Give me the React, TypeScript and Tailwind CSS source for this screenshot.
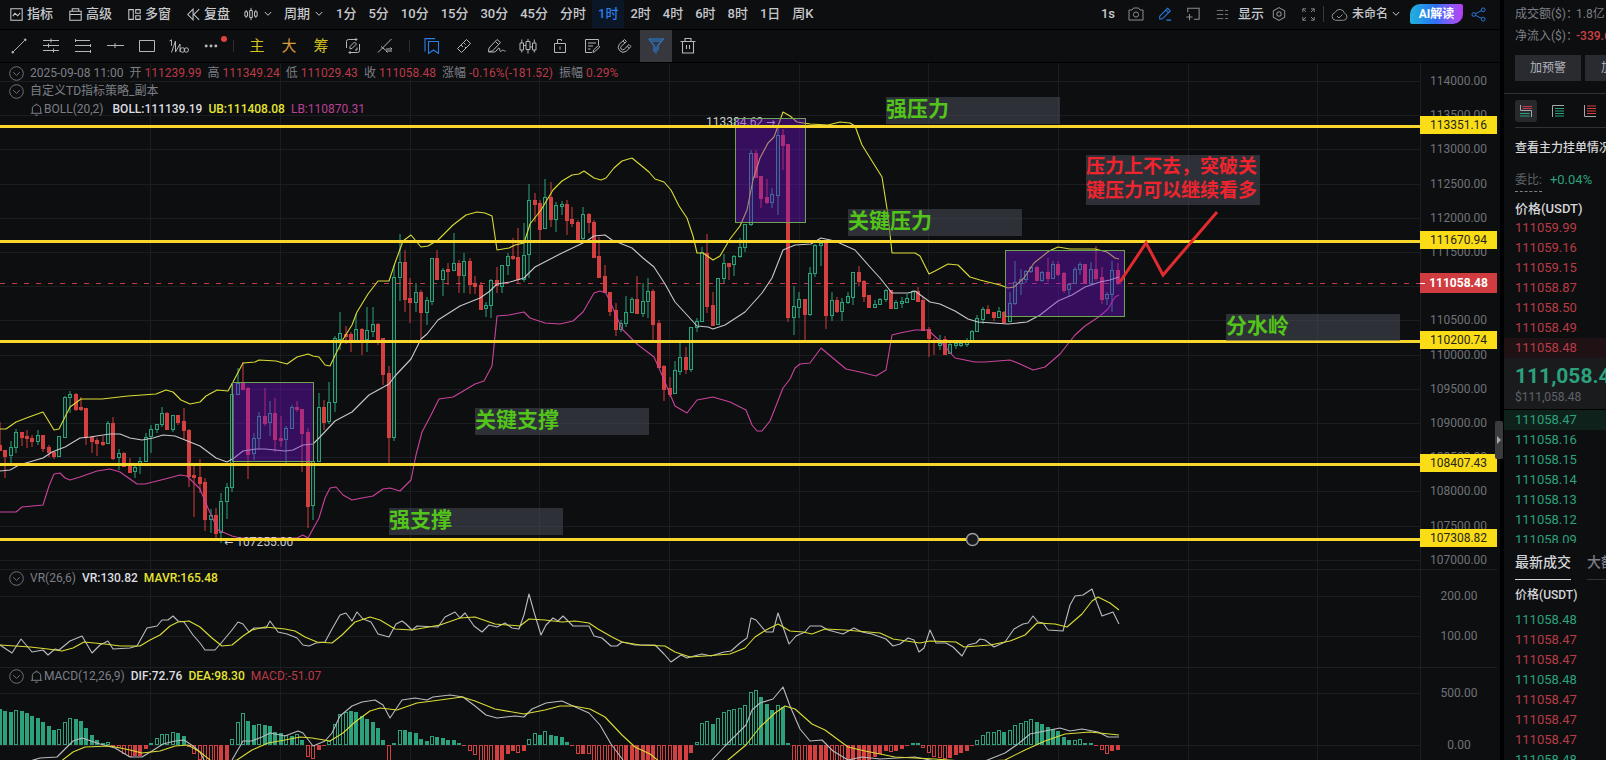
import type { ReactNode } from "react";

/* ---------- chart data (canvas coordinates) ---------- */

const STEP = 5.4;

// One token per candle: direction, wick top, body top, body bottom, wick bottom.
const CANDLES = `
R422,445,450,450 R450,450,456,478 G441,447,455,463 G429,432,447,453 R432,432,437,446 R430,436,438,448
R435,438,441,447 G430,435,441,445 R435,435,448,452 R445,447,452,457 R451,452,456,459 G436,436,456,456
G396,397,437,437 G391,394,397,413 R393,394,409,411 R397,407,409,411 R408,408,437,445 R436,437,441,453
R438,440,443,456 R436,442,444,446 G421,423,443,443 R417,423,458,460 G449,453,457,470 R452,453,466,467
R458,466,472,472 G463,467,471,478 G457,461,465,474 G433,437,461,461 G425,429,436,453 G424,424,429,433
G407,413,424,427 R412,413,429,429 G415,415,429,432 R415,415,422,425 R408,421,430,440 R429,430,476,487
R465,475,477,517 R459,477,483,493 R478,482,519,531 G509,515,519,533 R508,515,533,538 G493,501,532,543
G483,487,501,519 G383,394,487,492 G368,383,394,395 R362,383,389,390 R387,388,454,479 G433,438,453,460
G412,416,438,449 R388,416,423,426 G401,413,422,436 R398,413,439,452 R416,438,440,447 G426,428,439,465
G405,407,428,429 R401,407,409,412 R409,409,433,472 R428,432,506,528 G461,461,505,520 G393,407,461,462
R400,407,422,430 G382,402,421,424 G336,338,402,412 G312,333,339,350 R326,334,336,344 R332,334,341,352
G314,329,341,341 R328,329,340,355 G307,330,339,352 G307,324,331,337 R323,324,339,345 R338,338,374,385
R366,373,437,463 G265,277,437,441 G234,262,277,301 R250,262,299,312 R278,298,302,323 G283,292,302,312
R290,292,312,338 G297,300,312,325 G258,258,301,305 R250,258,279,279 G268,270,279,296 R263,269,271,285
G233,263,270,271 R260,263,275,293 G253,261,275,293 R258,261,284,294 R276,283,286,294 R282,285,309,309
G302,305,308,317 G279,280,305,318 R267,280,285,293 G265,265,286,293 G253,256,265,275 R238,256,258,260
R228,257,279,283 G223,255,279,282 G184,200,254,278 R193,200,204,222 R200,203,229,240 G179,197,228,229
R182,197,219,227 G202,205,219,232 G201,204,206,215 R200,204,220,235 R207,219,223,227 R220,222,239,243
G207,214,238,243 R213,214,222,233 R220,222,257,258 R237,256,277,277 R265,276,292,293 R292,292,311,316
R303,310,329,336 G320,323,329,332 G296,312,323,327 G297,299,312,312 R276,299,313,313 G283,301,313,317
G278,291,301,318 R289,291,324,340 R320,323,367,368 R365,366,389,401 R377,388,394,397 G361,370,393,393
G342,357,371,375 R347,357,369,374 G327,327,369,372 G318,321,327,332 G247,252,321,322 R234,253,306,313
R292,305,325,325 G278,278,324,325 G254,263,278,283 R263,263,266,280 G255,256,264,276 G238,247,256,258
G224,224,247,252 G150,153,224,226 R150,153,177,177 R176,176,198,208 R179,197,202,204 G188,194,202,208
G125,135,195,215 R129,135,145,170 R144,144,317,322 G286,306,317,335 G292,299,307,318 R299,299,314,340
G267,273,314,316 G244,245,273,277 G242,243,245,266 R242,243,315,329 G292,300,315,321 R297,300,311,313
G298,302,311,321 G292,296,302,304 G272,272,297,305 R266,272,281,286 R280,281,296,302 R295,295,307,308
G300,304,307,307 G298,299,304,305 G289,290,299,302 R290,290,308,308 G300,302,308,309 G297,301,303,308
G294,298,302,303 G290,291,299,300 R287,291,301,302 R297,300,330,330 R327,329,338,357 R338,340,342,355
G335,343,345,350 R336,339,354,355 G343,344,353,353 G342,343,345,349 G340,343,345,347 G338,342,344,347
G330,331,340,341 G315,318,331,332 G307,309,319,324 R305,309,313,314 R312,312,317,321 G307,311,317,318
R311,312,322,322 G292,303,321,322 G261,282,303,305 G269,279,283,295 G270,271,279,283 G266,267,271,273
R266,267,280,281 G271,272,280,282 R258,272,278,282 G261,264,278,279 R261,264,274,276 R272,273,290,293
G283,284,289,296 G267,269,283,283 G262,264,269,275 R264,264,283,283 G262,269,283,285 R246,269,278,281
R267,277,299,304 G292,294,298,305 G261,270,294,312 R263,270,283,285
`.trim().split(/\s+/).map((t) => {
  const [wickTop, top, bottom, wickBottom] = t.slice(1).split(",").map(Number);
  return { up: t[0] === "G", wickTop, top, bottom, wickBottom };
});

// One token per histogram bar: bar end, F = filled, H = hollow. Zero line is 745.
const MACD_BARS = `
709F 711F 712F 710H 711F 713F 716F 718F 722F 726F 730F 729H 722H 718H 719F 721F 728F 735F 740F 743H 742H
747F 748H 754H 757H 756F 756F 749F 743H 738H 734H 734H 732H 733F 736F 747H 754H 760H 765H 765H 765H 765F 765F
739H 722H 713H 721F 725F 724H 725F 726F 732F 733F 735H 736F 734H 740F 757H 759H 750F 746F
741H 724H 714H 712H 711F 712F 716F 719F 722F 728F 740F 762H 743F 730H 730F 732F 733F 739F 741F
736H 737F 738F 740F 740F 743F 746F 751H 755H 765H 765H 765H 765F 765F 754F 751F 753H 751F
739H 733H 735F 731H 735F 736F 737F 742F 746F 754H 754F 754H 765H 765H 765H 765H 765H 765H 765F 765F 765F
765F 765F 765F 765H 765H 765H 765F 765F 765F 753F 742H 723H 721H 724F 718H 712H 710H 709H 708H 705H 692H 690H
697F 704F 710F 705H 707F 743F 765H 765H 765H 765F 765F 765F 765F 765H 765H 765H 765F 765F 765F 765F 761F
757F 754F 751F 752H 751F 749F 746F 743F 743F 748H 753H 757H 758H 759H 758F 755F 753F 751F 746F
740H 735H 732H 732H 730H 732F 730H 725H 723H 721H 719H 722F 724F 727F 729F 731F 737F 740F 740H 739H 743F 743F
746F 750H 754H 751F 750F
`.trim().split(/\s+/).map((t) => ({ end: parseInt(t, 10), filled: t.endsWith("F") }));

const UPPER =
  "0,429 6,429 16,422 29,417 43,412 54,430 59,429 70,407 81,399 102,399 128,396 156,394 166,390 173,392 181,400 190,404 200,402 206,396 217,390 228,391 233,382 243,363 255,362 259,360 276,361 287,364 297,357 308,354 313,356 319,357 325,365 330,366 342,341 352,325 357,312 368,294 378,281 389,281 395,263 403,241 411,235 421,247 428,246 438,240 453,225 466,215 477,212 485,213 492,216 497,250 509,248 515,245 524,243 530,224 541,210 553,190 562,181 572,175 579,174 584,171 594,178 601,180 606,178 614,168 622,161 632,158 643,167 649,172 655,179 664,182 671,190 679,206 687,218 693,236 697,253 703,253 713,260 720,256 730,239 740,226 747,210 753,180 760,158 768,143 774,137 778,126 783,112 790,116 797,122 810,124 828,125 840,122 850,123 855,126 862,145 882,177 888,215 892,253 915,253 920,256 929,274 935,271 948,264 958,265 970,277 980,280 988,282 1000,285 1008,288 1014,287 1024,278 1034,263 1049,251 1058,247 1070,249 1095,249 1107,252 1115,258 1119,259";
const MIDDLE =
  "0,471 10,470 19,465 43,458 52,452 65,447 80,438 90,437 110,434 120,434 130,438 142,440 153,438 163,435 175,436 185,440 200,446 216,458 227,462 234,458 243,451 256,449 265,449 285,451 293,450 303,445 313,444 320,437 335,421 352,412 369,395 389,384 395,376 411,359 421,339 427,334 438,320 460,306 480,298 490,291 497,284 510,282 524,278 535,267 560,254 585,242 594,236 605,235 612,240 622,244 632,248 643,258 654,267 665,284 675,302 687,315 697,326 708,327 713,329 725,325 745,312 762,293 772,278 783,250 795,245 811,244 821,238 835,241 855,250 870,267 880,278 892,293 908,293 915,291 930,302 940,304 955,311 968,319 978,322 1008,324 1027,322 1040,315 1058,301 1072,295 1085,287 1100,282 1110,280 1119,277";
const LOWER =
  "0,512 16,512 22,507 43,505 49,486 54,474 60,473 65,478 70,480 80,477 97,471 110,469 120,472 137,484 145,484 165,479 180,475 187,476 200,489 208,508 218,530 232,536 240,538 297,538 303,535 308,538 319,518 325,498 330,488 336,487 343,495 352,500 362,498 373,496 383,489 390,488 400,491 411,480 416,455 422,432 430,417 439,399 453,397 460,393 475,384 484,381 492,366 497,316 509,315 524,312 530,318 545,323 560,324 573,321 583,312 594,293 600,291 606,293 612,306 622,329 637,344 654,357 662,375 675,406 687,413 697,400 713,397 730,402 740,407 746,410 752,425 757,431 762,431 770,421 783,388 790,379 795,368 800,364 810,363 821,348 846,369 860,372 876,376 886,370 892,335 900,333 915,330 928,330 940,341 955,358 975,362 985,362 1010,360 1020,364 1033,370 1045,367 1060,354 1075,335 1085,326 1100,316 1108,309 1115,297 1119,295";
const VR =
  "0,645 12,653 21,639 32,652 43,650 48,655 55,649 59,650 70,641 82,636 92,653 100,645 108,641 113,649 130,648 137,646 147,628 157,626 162,620 168,620 173,616 178,621 184,622 193,635 200,643 205,650 215,650 222,642 232,630 238,622 243,624 249,632 254,628 266,628 270,621 278,632 287,634 297,638 303,645 309,646 316,643 325,642 332,629 340,615 346,613 352,621 357,612 363,619 371,622 378,634 389,637 396,624 402,621 406,624 412,630 417,626 438,627 445,617 455,612 460,618 465,613 474,626 482,632 489,625 497,627 505,623 512,628 519,629 524,615 529,594 534,612 541,635 546,625 553,618 558,621 563,616 573,626 589,626 594,636 602,638 611,646 617,646 622,642 635,645 655,645 664,654 671,662 681,655 687,658 694,656 702,654 711,656 724,652 731,651 740,643 747,638 751,618 756,620 766,632 773,632 778,613 783,627 789,644 796,636 805,632 810,626 821,626 828,630 843,634 854,628 862,632 872,634 886,639 893,646 900,644 908,638 914,640 919,652 924,648 930,630 936,643 946,643 953,647 962,656 968,645 976,643 980,639 985,640 994,647 1005,642 1014,629 1023,624 1028,623 1033,616 1038,622 1043,623 1048,630 1063,631 1070,605 1075,596 1083,595 1092,589 1097,603 1102,616 1113,612 1119,624";
const MAVR =
  "0,645 30,647 48,649 62,651 73,648 84,642 105,644 120,646 140,646 150,640 160,635 170,626 178,622 189,621 200,627 212,638 222,646 232,645 243,636 252,630 265,627 285,629 295,631 305,637 317,642 332,643 342,635 355,622 370,617 380,620 395,629 412,630 440,625 460,618 475,617 495,624 520,626 529,619 545,620 562,622 575,621 589,623 598,629 612,637 622,642 640,645 665,646 675,652 690,657 705,656 730,654 745,648 755,637 766,630 778,624 790,631 803,632 812,634 825,629 845,630 880,633 893,639 920,643 930,641 956,642 964,647 990,645 1010,641 1025,635 1037,623 1055,624 1067,627 1082,614 1092,601 1098,597 1110,603 1119,610";
const DIF =
  "30,761 40,758 57,757 65,749 73,741 82,738 100,744 115,748 130,757 142,757 152,751 163,744 175,741 184,740 193,746 200,752 206,764 220,775 232,760 243,741 252,741 262,737 270,733 285,736 298,731 303,733 313,746 325,741 332,733 340,716 352,706 362,702 375,700 383,705 390,718 402,700 415,698 427,700 433,697 450,695 463,697 475,706 486,715 497,718 515,716 524,717 532,709 546,703 562,701 573,706 589,713 600,725 611,744 623,760 650,790 690,785 712,760 725,746 746,725 752,710 760,703 773,699 783,687 790,706 800,729 810,741 822,740 833,751 848,760 862,757 880,759 915,757 935,761 985,761 1005,753 1018,744 1030,734 1045,731 1060,728 1070,731 1082,729 1098,732 1108,737 1119,737";
const DEA =
  "60,762 73,752 85,747 110,746 130,750 142,753 160,751 175,746 188,745 200,752 215,764 237,760 252,750 268,743 285,740 300,737 312,738 330,741 343,733 355,722 370,711 380,708 397,710 417,703 440,700 462,697 475,701 495,709 524,714 545,710 560,706 573,706 590,709 605,717 622,735 635,747 650,754 660,762 690,785 728,760 746,745 760,727 775,713 785,706 795,709 812,724 825,730 848,747 865,751 895,757 935,759 975,762 1005,760 1025,750 1045,741 1065,734 1090,732 1119,735";

const COLUMNS = [150, 280, 410, 539, 669, 799, 928, 1058, 1188, 1317];
const PRICE_ROWS = Array.from({ length: 15 }, (_, i) => ({
  y: Math.round(81 + i * 34.2),
  label: (114000 - i * 500).toFixed(2),
}));
const LEVELS = [
  { y: 126, label: "113351.16" },
  { y: 241, label: "111670.94" },
  { y: 341, label: "110200.74" },
  { y: 464, label: "108407.43" },
  { y: 539, label: "107308.82" },
];
const ZONES = [
  { x: 232, y: 382, w: 81, h: 79 },
  { x: 735, y: 118, w: 70, h: 104 },
  { x: 1005, y: 250, w: 119, h: 66 },
];

const GREEN = "#2ba17c";
const RED = "#d43f3f";

/* ---------- icons ---------- */

function Icon({ children, size = 16, className = "" }: { children: ReactNode; size?: number; className?: string }) {
  return (
    <svg width={size} height={size} viewBox="0 0 16 16" fill="none" stroke="currentColor" strokeWidth="1" className={"shrink-0 " + className} aria-hidden="true">
      {children}
    </svg>
  );
}

const Chevron = () => (
  <svg width="8" height="6" viewBox="0 0 8 6" fill="none" stroke="currentColor" className="shrink-0" aria-hidden="true">
    <path d="M.8 1 4 4.3 7.2 1" />
  </svg>
);

const Bell = () => (
  <svg width="13" height="13" viewBox="0 0 13 13" fill="none" stroke="currentColor" className="shrink-0" aria-hidden="true">
    <path d="M.8 10.3h11.4M2.3 10.2V6a4.2 4.2 0 0 1 8.4 0v4.2M6.5 1.7V.6M5.2 12.2h2.6" />
  </svg>
);

function Collapse({ label }: { label: string }) {
  return (
    <button aria-label={label} className="flex size-[15px] shrink-0 items-center justify-center text-[#6d7077]">
      <svg width="15" height="15" viewBox="0 0 15 15" fill="none" stroke="currentColor">
        <circle cx="7.5" cy="7.5" r="6.8" />
        <path d="M4.2 6.2 7.5 9.4l3.3-3.2" />
      </svg>
    </button>
  );
}

const DRAW_TOOLS: [string, ReactNode][] = [
  ["趋势线", <><path d="M2.5 13.5 13.2 2.8" /><circle cx="1.8" cy="14.2" r=".9" fill="currentColor" /><circle cx="14.2" cy="1.8" r=".9" fill="currentColor" /></>],
  ["平行线", <path d="M0 2.500h16M0 7.500h16M0 12.500h16M8 .5v4M5.500 5.500v4M10.500 10.500v4" />],
  ["黄金分割", <path d="M0 2.500h15M0 7.500h15M0 13.500h16M.5 1v3M15.500 6v3M15.500 12v3" />],
  ["水平线", <path d="M0 7.500h17M8 5v5" />],
  ["矩形", <path d="M.5 2.500h15v11H.5z" />],
];

/* ---------- toolbars ---------- */

const PERIODS = ["1分", "5分", "10分", "15分", "30分", "45分", "分时", "1时", "2时", "4时", "6时", "8时", "1日", "周K"];

function TopBar() {
  return (
    <header className="flex h-[30px] shrink-0 items-center justify-between border-b border-black pr-[14px] text-[13px] font-medium leading-5 text-[#c6c8cc]">
      <div className="flex h-full items-center pb-px">
        <div className="flex items-center gap-4 pl-[10px] pr-3">
          <button className="flex items-center gap-1">
            <Icon size={13}><path d="M1 1h14v14H1zM3.500 10 6 6.500l3.500 3L12.500 6" strokeWidth="1.3" /></Icon>指标
          </button>
          <button className="flex items-center gap-1">
            <Icon size={13}><path d="M1 4h14v11H1zM4 4V1h8v3M1 8h14" strokeWidth="1.3" /></Icon>高级
          </button>
          <button className="flex items-center gap-1">
            <Icon size={13}><path d="M1 2h5.500v12H1zM9.500 2H15v4.500H9.500zM9.500 9.500H15V14H9.500z" strokeWidth="1.3" /></Icon>多窗
          </button>
          <button className="flex items-center gap-1">
            <Icon size={13}><path d="M7.500 1.500 1 8l6.500 6.500zM15 1.500 8.500 8l6.500 6.500" strokeWidth="1.3" /></Icon>复盘
          </button>
          <button aria-label="K线类型" className="-ml-0.5 flex items-center gap-[6px]">
            <Icon size={14}><path d="M1 5.500h3v5H1zM6.500 4h3v8h-3zM12 5.500h3v5h-3zM2.500 3.500v2M2.500 10.500v2M8 1v3M8 12v3M13.500 3.500v2M13.500 10.500v2" strokeWidth="1.1" /></Icon>
            <Chevron />
          </button>
        </div>
        <button className="mr-[7px] flex items-center gap-[5px]">周期 <Chevron /></button>
        <nav className="flex h-full" aria-label="周期">
          {PERIODS.map((p) => (
            <button key={p} className={"h-full px-[6px] " + (p === "1时" ? "bg-[#0b1626] text-[#2a7fe6]" : "")}>{p}</button>
          ))}
        </nav>
      </div>
      <div className="flex items-center pb-px text-[#8b8d92]">
        <button className="mr-[13px] text-[#c6c8cc]">1s</button>
        <button aria-label="截图" className="mr-[14px]">
          <Icon><path d="M1 4h3l1.500-2h5L12 4h3v10H1z" /><circle cx="8" cy="8.500" r="2.600" /></Icon>
        </button>
        <button aria-label="画线" className="mr-[14px] text-[#2a7fe6]">
          <Icon size={14}><path d="M2 14v-3.500L11 1.500 14 4.500 5 13.500 2 14zM9 3.500l3 3M9.500 15H15" strokeWidth="1.200" /></Icon>
        </button>
        <button aria-label="添加窗口" className="mr-[16px]">
          <Icon size={14}><path d="M2 6V1.500h13V14h-6M4 8v7M.5 11.500h7" strokeWidth="1.200" /></Icon>
        </button>
        <button aria-label="列表" className="mr-[9px]">
          <Icon size={13}><path d="M1 3h8M1 8h8M1 13h8M11 3h4M11 8h4M11 13h4" /></Icon>
        </button>
        <button className="mr-2 text-[#c6c8cc]">显示</button>
        <button aria-label="设置" className="mr-[16px]">
          <Icon size={14}><path d="M8 .700 14.500 4.300v7.400L8 15.300 1.500 11.700V4.300z" strokeWidth="1.200" /><circle cx="8" cy="8" r="2.500" strokeWidth="1.200" /></Icon>
        </button>
        <button aria-label="全屏" className="mr-2">
          <Icon size={13}><path d="M1 5V1h4M1 1l4 4M11 1h4v4M15 1l-4 4M1 11v4h4M1 15l4-4M15 11v4h-4M15 15l-4-4" strokeWidth="1.100" /></Icon>
        </button>
        <span className="mr-[7px] h-4 w-px bg-[#37393e]" />
        <button className="mr-[10px] flex items-center gap-1 text-[12px] text-[#c6c8cc]">
          <svg width="17" height="13" viewBox="0 0 17 13" fill="none" stroke="#8b8d92" aria-hidden="true"><path d="M4.500 12.300h8.200a3.600 3.600 0 0 0 .8-7A5 5 0 0 0 4 4.500a4 4 0 0 0 .5 7.800zM6 8l2 2 3.500-3.500" /></svg>
          未命名
          <Chevron />
        </button>
        <button className="mr-2 h-5 w-[53px] rounded-tl-[10px] rounded-br-[10px] rounded-bl-[2px] rounded-tr-[2px] bg-linear-to-r from-[#22b2dc] via-[#2f6cf6] to-[#b63cf5] text-[12px] font-bold leading-5 text-white">AI解读</button>
        <button aria-label="分享" className="text-[#2a7fe6]">
          <Icon size={15}><circle cx="3" cy="8" r="2" /><circle cx="13" cy="3" r="2" /><circle cx="13" cy="13" r="2" /><path d="m4.800 7.100 6.400-3.200M4.800 8.900l6.400 3.200" /></Icon>
        </button>
      </div>
    </header>
  );
}

function Tool({ label, children, className = "" }: { label: string; children: ReactNode; className?: string }) {
  return (
    <button aria-label={label} className={"relative flex h-full w-8 items-center justify-center " + className}>
      {children}
    </button>
  );
}

function DrawBar() {
  return (
    <div className="flex h-[33px] shrink-0 items-center border-b border-black pl-[3px] text-[#b4b6ba]">
      {DRAW_TOOLS.map(([label, art]) => (
        <Tool key={label} label={label}><Icon className="overflow-visible">{art}</Icon></Tool>
      ))}
      <Tool label="波浪">
        <svg width="20" height="15" viewBox="0 0 20 15" fill="none" stroke="currentColor">
          <path d="M.5 2 2.500.8v6M2.500 13.500 6.500 2v11l4.500-8v8" />
          <circle cx="13.500" cy="11" r="2.300" /><circle cx="17.300" cy="11" r="2.200" />
        </svg>
      </Tool>
      <Tool label="更多">
        <Icon size={14}><g fill="currentColor" stroke="none"><circle cx="2.500" cy="8" r="1.700" /><circle cx="8" cy="8" r="1.700" /><circle cx="13.500" cy="8" r="1.700" /></g></Icon>
        <span className="absolute right-0 top-[6px] size-[6px] rounded-full bg-[#e0433c]" />
      </Tool>
      <span className="ml-[6px] mr-[7px] h-3 w-px bg-[#2a2c30]" />
      <Tool label="主力" className="text-[15px] text-[#d6c21f]">主</Tool>
      <Tool label="大单" className="text-[15px] text-[#d79a3c]">大</Tool>
      <Tool label="筹码" className="text-[15px] text-[#d6c21f]">筹</Tool>
      <Tool label="切换画线">
        <Icon><path d="M1.500 10V3.500a2 2 0 0 1 2-2H12M10.500 0 12 1.500 10.500 3M14.500 6v6.500a2 2 0 0 1-2 2H4M5.500 13 4 14.500 5.500 16M5 10.800V8.500L9.500 4l2 2L7 10.500zM12 9.500v2.500h-2" /></Icon>
      </Tool>
      <Tool label="画线设置">
        <Icon><path d="M1 14.500 14.500 1M4 8.500l5 4" /><path d="M9 11h6l-1.500-1.500M15 13H9l1.500 1.500" /></Icon>
      </Tool>
      <span className="ml-2 mr-[6px] h-3 w-px bg-[#2a2c30]" />
      <Tool label="收藏" className="text-[#2a7fe6]">
        <Icon><path d="M4.500 3.500h10v12l-5-3.500-5 3.500zM1 13.500V.6h10" strokeWidth="1.100" /></Icon>
      </Tool>
      <Tool label="测量">
        <Icon><path d="M1.500 10.500 10.500 1.500l4 4-9 9zM5 7l2 2M7.500 4.500l2 2M10 10l-1.200-1.200" /></Icon>
      </Tool>
      <Tool label="画笔">
        <svg width="19" height="16" viewBox="0 0 19 16" fill="none" stroke="currentColor"><path d="M1.500 13.500 2 10 10 1.500 13.500 4.500 5.500 13zM8.500 3.500l3 3M1.500 14h6c2 0 3-4 4.500-4s0 3.500 1.500 3.500S15 11.500 16 12s.5 1 2.500 1" /></svg>
      </Tool>
      <Tool label="K线样式">
        <svg width="18" height="16" viewBox="0 0 18 16" fill="none" stroke="currentColor"><path d="M1 5h3.500v7H1zM7 3.500h4v8H7zM13.500 5H17v7h-3.500zM2.800 1.500V5M2.800 12v2.500M9 1v2.500M9 11.500v4M15.300 1.500V5M15.300 12v2.500M4.500 7.500H7M11 9h2.500" /></svg>
      </Tool>
      <Tool label="锁定">
        <Icon><path d="M2.500 5.500h11v9h-11zM5.500 5.500v-4h4v1.500M8 8.500v3" /></Icon>
      </Tool>
      <Tool label="笔记">
        <Icon><path d="M14.500 7V1.500h-13v13H8M4 5h8M4 8h5M4 11h2.500M9 14.500l.5-2.500 5-4.500 1.300 1.500-5 4.500z" /></Icon>
      </Tool>
      <Tool label="磁吸">
        <Icon><path d="M8.500 1.500 3.300 6.200a5 5 0 0 0 7 7L15 8.500l-2-2-4.700 4.700a2 2 0 0 1-3-3L10.500 3.500zM7 3l2 2M11.200 8.300l2 2" /></Icon>
      </Tool>
      <Tool label="筛选" className="bg-[#37383d] text-[#2a7fe6]">
        <Icon><path d="M.8 1h14.400L10 7.500v5M.8 1 6 7.500v6.500M3.500 3h9M8 8.500V15.500" strokeWidth="1.100" /></Icon>
      </Tool>
      <Tool label="删除">
        <Icon><path d="M.5 3.500h15M5 3.500v-3h6v3M2.500 3.500v11.500h11V3.500M6.500 7v4M9.500 7v4" strokeWidth="1.100" /></Icon>
      </Tool>
    </div>
  );
}

/* ---------- chart panes ---------- */

function Plot({ top, rows, children }: { top: number; rows: number[]; children: ReactNode }) {
  return (
    <svg className="block h-full w-full" aria-hidden="true">
      <g transform={`translate(0 ${-top})`}>
        <g stroke="#1b1d20" strokeWidth="1">
          {COLUMNS.map((x) => <line key={x} x1={x + 0.5} x2={x + 0.5} y1="0" y2="900" />)}
          {rows.map((y) => <line key={y} x1="0" x2="100%" y1={y + 0.5} y2={y + 0.5} />)}
        </g>
        {children}
      </g>
    </svg>
  );
}

function Curve({ points, color }: { points: string; color: string }) {
  return <polyline points={points} fill="none" stroke={color} strokeWidth="1.1" strokeLinejoin="round" />;
}

function Note({ place, children }: { place: string; children: ReactNode }) {
  return (
    <p className={"absolute h-[27px] w-[174px] bg-[#4a4c58]/55 text-[21px] font-bold leading-[24px] text-[#52c41a] " + place}>{children}</p>
  );
}

function AxisLabel({ y, children }: { y: number; children: ReactNode }) {
  return <li className="absolute inset-x-0 -translate-y-1/2 leading-4" style={{ top: y }}>{children}</li>;
}

function Stat({ label, value }: { label: string; value: string }) {
  return <span className="flex gap-[3px]"><span>{label}</span><span className="text-[#bb3a48]">{value}</span></span>;
}

function PricePane() {
  const top = 63;
  return (
    <section className="flex h-[507px] shrink-0 border-b border-[#1d1f22]">
      <div className="relative min-w-0 flex-1">
        <Plot top={top} rows={PRICE_ROWS.map((r) => r.y)}>
          <line x1="0" x2="100%" y1="283.500" y2="283.500" stroke="#c43a4c" strokeDasharray="5 7" />
          {CANDLES.map((c, i) => {
            const x = Math.round(i * STEP);
            const color = c.up ? GREEN : RED;
            const h = Math.max(c.bottom - c.top, 1);
            return (
              <g key={i}>
                <rect x={x - 0.5} y={c.wickTop} width="1" height={Math.max(c.top - c.wickTop, 0)} fill={color} />
                <rect x={x - 0.5} y={c.bottom} width="1" height={Math.max(c.wickBottom - c.bottom, 0)} fill={color} />
                {c.up
                  ? <rect x={x - 1.5} y={c.top + 0.5} width="3" height={h} fill="#0d2620" stroke={color} />
                  : <rect x={x - 2} y={c.top} width="4" height={h + 1} fill={color} />}
              </g>
            );
          })}
          <Curve points={UPPER} color="#d9dc35" />
          <Curve points={MIDDLE} color="#c8c8cc" />
          <Curve points={LOWER} color="#c8449c" />
          <g fill="#c8cace" fontSize="12">
            <text x="706" y="126">113384.62 <tspan fontFamily="DejaVu Sans" fontSize="11">→</tspan></text>
            <text x="224" y="546"><tspan fontFamily="DejaVu Sans" fontSize="11">←</tspan> 107255.00</text>
          </g>
          {ZONES.map((z) => (
            <rect key={z.x} x={z.x + 0.5} y={z.y + 0.5} width={z.w} height={z.h} fill="#7410d2" fillOpacity=".4" stroke="#6fa552" />
          ))}
          {LEVELS.map((l) => <rect key={l.y} x="0" y={l.y - 1} width="100%" height="3" fill="#f8d62c" />)}
          <polyline points="1120,282 1146,243 1163,275 1217,212" fill="none" stroke="#e12b2e" strokeWidth="3" />
          <circle cx="972.500" cy="539.500" r="6" fill="#17181b" stroke="#9a9ca2" strokeWidth="1.500" />
        </Plot>

        <div className="absolute left-[9px] top-px text-[12px] leading-[18px] text-[#7c7f86]">
          <div className="flex items-center gap-[6px]">
            <Collapse label="收起行情" />
            <div className="flex gap-[6px]">
              <span>2025-09-08 11:00</span>
              <Stat label="开" value="111239.99" />
              <Stat label="高" value="111349.24" />
              <Stat label="低" value="111029.43" />
              <Stat label="收" value="111058.48" />
              <Stat label="涨幅" value="-0.16%(-181.52)" />
              <Stat label="振幅" value="0.29%" />
            </div>
          </div>
          <div className="flex items-center gap-[6px]">
            <Collapse label="收起指标" />
            <span>自定义TD指标策略_副本</span>
          </div>
          <div className="flex items-center gap-[6px] pl-[21px]">
            <span className="mr-[3px] flex items-center gap-px"><Bell />BOLL(20,2)</span>
            <span className="font-medium text-[#dcdde0]">BOLL:111139.19</span>
            <span className="font-medium text-[#e6e432]">UB:111408.08</span>
            <span className="text-[#bb4195]">LB:110870.31</span>
          </div>
        </div>

        <Note place="left-[886px] top-[34px]">强压力</Note>
        <Note place="left-[848px] top-[146px]">关键压力</Note>
        <Note place="left-[475px] top-[345px]">关键支撑</Note>
        <Note place="left-[389px] top-[445px]">强支撑</Note>
        <Note place="left-[1226px] top-[251px]">分水岭</Note>
        <p className="absolute left-[1086px] top-[92px] w-[174px] bg-[#4a4c58]/55 pb-0.5 text-[19px] font-bold leading-[24px] text-[#f0242e]">
          压力上不去，突破关键压力可以继续看多
        </p>
      </div>
      <ol className="relative w-[77px] shrink-0 bg-linear-to-r from-[#1d1f22] from-[1px] to-transparent to-[1px] text-center text-[12px] text-[#6f7279]">
        {PRICE_ROWS.map((r) => <AxisLabel key={r.label} y={r.y - top}>{r.label}</AxisLabel>)}
        {LEVELS.map((l) => (
          <AxisLabel key={l.label} y={l.y - top - 1}>
            <span className="block bg-[#fadd17] leading-[18px] text-[#26251c]">{l.label}</span>
          </AxisLabel>
        ))}
        <AxisLabel y={220}>
          <span className="relative block bg-[#d03c3f] font-bold leading-5 text-white">
            111058.48
            <span className="absolute left-0 top-[10px] h-px w-[5px] bg-white" />
          </span>
        </AxisLabel>
      </ol>
    </section>
  );
}

function IndicatorPane({ top, rows, className, legend, children }: {
  top: number; rows: { y: number; label: string }[]; className: string; legend: ReactNode; children: ReactNode;
}) {
  return (
    <section className={"flex overflow-hidden " + className}>
      <div className="relative min-w-0 flex-1">
        <Plot top={top} rows={rows.map((r) => r.y)}>{children}</Plot>
        <div className="absolute left-[9px] top-0 flex items-center gap-[6px] text-[12px] leading-[17px] text-[#7c7f86]">{legend}</div>
      </div>
      <ol className="relative w-[77px] shrink-0 border-l border-[#1d1f22] text-center text-[12px] text-[#6f7279]">
        {rows.map((r) => <AxisLabel key={r.label} y={r.y - top}>{r.label}</AxisLabel>)}
      </ol>
    </section>
  );
}

/* ---------- order book ---------- */

const ASKS = ["111059.99", "111059.16", "111059.15", "111058.87", "111058.50", "111058.49", "111058.48"];
const BIDS = ["111058.47", "111058.16", "111058.15", "111058.14", "111058.13", "111058.12", "111058.09"];
const TRADES: [string, boolean][] = [
  ["111058.48", true], ["111058.47", false], ["111058.47", false], ["111058.48", true],
  ["111058.47", false], ["111058.47", false], ["111058.47", false], ["111058.48", true],
];

function OrderBook() {
  return (
    <aside className="w-[106px] shrink-0 overflow-hidden whitespace-nowrap border-l-4 border-black text-[13px] leading-5 text-[#d5d6d9]">
      <dl className="pl-[11px] pt-[3px] text-[12px] leading-[22px] text-[#7c7f86]">
        <div className="flex gap-[6px]"><dt>成交额($)：</dt><dd className="-ml-2">1.8亿</dd></div>
        <div className="flex gap-[6px]"><dt>净流入($)：</dt><dd className="-ml-2 font-medium text-[#cf3f45]">-339.6万</dd></div>
      </dl>
      <div className="mt-2 flex gap-1 pl-[11px] text-[12px] text-[#b3b5ba]">
        <button className="h-[26px] w-[66px] shrink-0 bg-[#292b31]">加预警</button>
        <button className="h-[26px] w-[66px] shrink-0 bg-[#292b31] pl-4 text-left">加自选</button>
      </div>
      <div className="mt-3 border-t border-[#303237] pl-[11px] pt-[6px]">
        <div className="flex h-[28px] items-start gap-[10px] border-b border-[#303237]">
          <button aria-label="全部挂单" className="flex size-[22px] shrink-0 items-center justify-center rounded-[3px] bg-[#27292c]">
            <svg width="12" height="12" viewBox="0 0 12 12" fill="none"><path d="M.5 0v5.500h11V12" stroke="#a6a8ad" /><path d="M2.500 1.500H12M2.500 3.500H12" stroke="#c23b4b" /><path d="M0 8.500h9.500M0 11h9.500" stroke="#2ba17c" /></svg>
          </button>
          <button aria-label="买单" className="flex size-[22px] shrink-0 items-center justify-center">
            <svg width="12" height="12" viewBox="0 0 12 12" fill="none"><path d="M.5 12V.5H12" stroke="#a6a8ad" /><path d="M3 3.500h9M3 6h9M3 8.500h9M3 11h9" stroke="#2ba17c" /></svg>
          </button>
          <button aria-label="卖单" className="flex size-[22px] shrink-0 items-center justify-center">
            <svg width="12" height="12" viewBox="0 0 12 12" fill="none"><path d="M.5 0v11.500H12" stroke="#a6a8ad" /><path d="M3 1h9M3 3.500h9M3 6h9M3 8.500h9" stroke="#d43f3f" /></svg>
          </button>
        </div>
      </div>
      <p className="pl-[11px] pt-[10px] text-[12px] font-medium">查看主力挂单情况</p>
      <div className="flex gap-2 pl-[11px] pt-[10px]">
        <span className="h-6 border-b border-dashed border-[#7c7f86] text-[12px] leading-6 text-[#5f6269]">委比: </span>
        <span className="leading-6 text-[#2ba17c]">+0.04%</span>
      </div>
      <h2 className="pl-[11px] pt-[7px] font-medium leading-[19px]">价格(USDT)</h2>
      <ul className="text-[#b83c46]">
        {ASKS.map((p, i) => <li key={p} className={"pl-[11px] " + (i === ASKS.length - 1 ? "bg-[#1f1114]" : "")}>{p}</li>)}
      </ul>
      <div className="h-[52px] border-b border-black bg-[#1a1b1d] pl-[11px] pt-[6px]">
        <p className="text-[21px] font-bold leading-[25px] text-[#2ba17c]">111,058.48</p>
        <p className="text-[12px] leading-4 text-[#5f6269]">$111,058.48</p>
      </div>
      <ul className="h-[133px] overflow-hidden text-[#2ba17c]">
        {BIDS.map((p, i) => <li key={p} className={"pl-[11px] " + (i === 0 ? "bg-[#0e211b]" : "")}>{p}</li>)}
      </ul>
      <div className="flex gap-4 pl-[11px] pt-px text-[14px] font-medium leading-[28px]">
        <button className="h-9 shrink-0 border-b border-[#d5d6d9]">最新成交</button>
        <button className="h-9 shrink-0 border-b border-[#303237] text-[#7c7f86]">大额成交</button>
      </div>
      <h2 className="pl-[11px] pt-[5px] text-[12px] font-medium">价格(USDT)</h2>
      <ul className="pt-[5px]">
        {TRADES.map(([p, up], i) => <li key={i} className={"pl-[11px] " + (up ? "text-[#2ba17c]" : "text-[#b83c46]")}>{p}</li>)}
      </ul>
    </aside>
  );
}

export default function App() {
  return (
    <div className="flex h-screen overflow-hidden bg-[#0d0e10] font-['Roboto','Noto_Sans_CJK_SC',sans-serif]">
      <main className="relative flex min-w-0 flex-1 flex-col">
        <TopBar />
        <DrawBar />
        <div className="flex min-h-0 flex-1 flex-col pr-[3px]">
          <PricePane />
          <IndicatorPane
            top={570}
            className="h-[98px] shrink-0 border-b border-[#1d1f22]"
            rows={[{ y: 596, label: "200.00" }, { y: 636, label: "100.00" }]}
            legend={<>
              <Collapse label="收起VR" />
              <span>VR(26,6)</span>
              <span className="font-medium text-[#dcdde0]">VR:130.82</span>
              <span className="font-medium text-[#e6e432]">MAVR:165.48</span>
            </>}
          >
            <Curve points={VR} color="#b9bbc0" />
            <Curve points={MAVR} color="#d9dc35" />
          </IndicatorPane>
          <IndicatorPane
            top={668}
            className="min-h-0 flex-1"
            rows={[{ y: 693, label: "500.00" }, { y: 745, label: "0.00" }]}
            legend={<>
              <Collapse label="收起MACD" />
              <span className="flex items-center gap-px"><Bell />MACD(12,26,9)</span>
              <span className="font-medium text-[#dcdde0]">DIF:72.76</span>
              <span className="font-medium text-[#e6e432]">DEA:98.30</span>
              <span className="text-[#bb3a48]">MACD:-51.07</span>
            </>}
          >
            {MACD_BARS.map((b, i) => {
              const x = Math.round(i * STEP);
              const up = b.end < 745;
              const y = up ? b.end : 745;
              const h = Math.abs(b.end - 745);
              const color = up ? GREEN : RED;
              return b.filled
                ? <rect key={i} x={x - 2} y={y} width="4" height={h} fill={color} />
                : <rect key={i} x={x - 1.5} y={y + 0.5} width="3" height={Math.max(h - 1, 1)} fill="#0d0e10" stroke={color} />;
            })}
            <Curve points={DIF} color="#b9bbc0" />
            <Curve points={DEA} color="#d9dc35" />
          </IndicatorPane>
        </div>
        <button aria-label="展开侧栏" className="absolute -right-[3px] top-[421px] z-10 flex h-[38px] w-2 items-center justify-center rounded-[2px] bg-[#3a3c40]">
          <svg width="4" height="8" viewBox="0 0 4 8" fill="#a6a8ad"><path d="M0 0l4 4-4 4z" /></svg>
        </button>
      </main>
      <OrderBook />
    </div>
  );
}
